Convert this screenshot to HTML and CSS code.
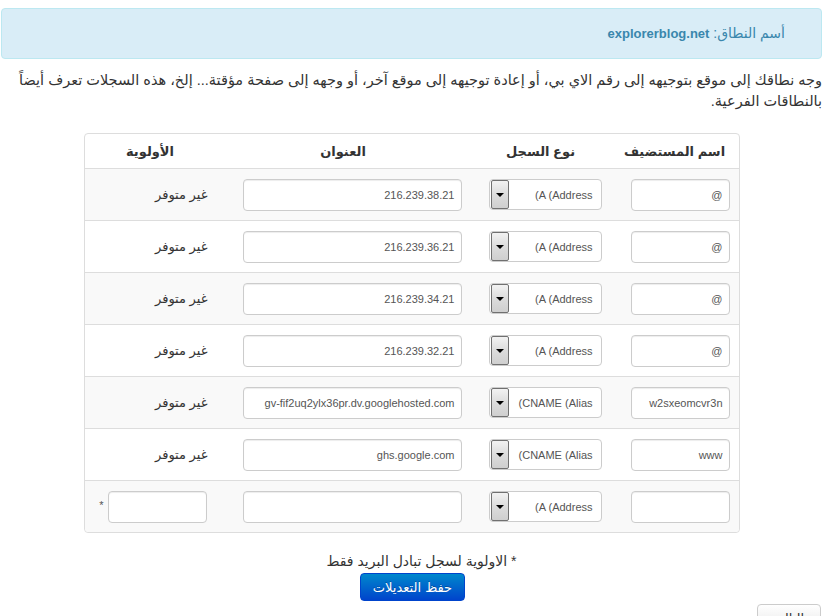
FILE: index.html
```html
<!DOCTYPE html>
<html lang="ar" dir="rtl">
<head>
    <meta charset="UTF-8">
    <meta name="viewport" content="width=device-width, initial-scale=1.0">
    <title>إدارة سجلات النطاق</title>
    <link rel="stylesheet" href="styles.css">
</head>
<body>
    <div class="page">
        <div class="alert">أسم النطاق: <strong>explorerblog.net</strong></div>

        <p class="intro">وجه نطاقك إلى موقع بتوجيهه إلى رقم الاي بي، أو إعادة توجيهه إلى موقع آخر، أو وجهه إلى صفحة مؤقتة... إلخ، هذه السجلات تعرف أيضاً بالنطاقات الفرعية.</p>

        <form class="dns-form" onsubmit="return false;">
            <table class="records">
                <thead>
                    <tr>
                        <th class="col-host">اسم المستضيف</th>
                        <th class="col-type">نوع السجل</th>
                        <th class="col-address">العنوان</th>
                        <th class="col-priority">الأولوية</th>
                    </tr>
                </thead>
                <tbody>
                    <tr>
                        <td><input type="text" class="field host" value="@"></td>
                        <td><div class="select"><span class="select-text">(A (Address</span><span class="select-arrow"></span></div></td>
                        <td><input type="text" class="field address" value="216.239.38.21"></td>
                        <td class="na">غير متوفر</td>
                    </tr>
                    <tr>
                        <td><input type="text" class="field host" value="@"></td>
                        <td><div class="select"><span class="select-text">(A (Address</span><span class="select-arrow"></span></div></td>
                        <td><input type="text" class="field address" value="216.239.36.21"></td>
                        <td class="na">غير متوفر</td>
                    </tr>
                    <tr>
                        <td><input type="text" class="field host" value="@"></td>
                        <td><div class="select"><span class="select-text">(A (Address</span><span class="select-arrow"></span></div></td>
                        <td><input type="text" class="field address" value="216.239.34.21"></td>
                        <td class="na">غير متوفر</td>
                    </tr>
                    <tr>
                        <td><input type="text" class="field host" value="@"></td>
                        <td><div class="select"><span class="select-text">(A (Address</span><span class="select-arrow"></span></div></td>
                        <td><input type="text" class="field address" value="216.239.32.21"></td>
                        <td class="na">غير متوفر</td>
                    </tr>
                    <tr>
                        <td><input type="text" class="field host" value="w2sxeomcvr3n"></td>
                        <td><div class="select"><span class="select-text">(CNAME (Alias</span><span class="select-arrow"></span></div></td>
                        <td><input type="text" class="field address" value="gv-fif2uq2ylx36pr.dv.googlehosted.com"></td>
                        <td class="na">غير متوفر</td>
                    </tr>
                    <tr>
                        <td><input type="text" class="field host" value="www"></td>
                        <td><div class="select"><span class="select-text">(CNAME (Alias</span><span class="select-arrow"></span></div></td>
                        <td><input type="text" class="field address" value="ghs.google.com"></td>
                        <td class="na">غير متوفر</td>
                    </tr>
                    <tr>
                        <td><input type="text" class="field host" value=""></td>
                        <td><div class="select"><span class="select-text">(A (Address</span><span class="select-arrow"></span></div></td>
                        <td><input type="text" class="field address" value=""></td>
                        <td class="prio-cell"><input type="text" class="field priority" value=""><span class="star">*</span></td>
                    </tr>
                </tbody>
            </table>

            <p class="note">* الاولوية لسجل تبادل البريد فقط</p>
            <div class="actions">
                <button type="submit" class="btn btn-primary">حفظ التعديلات</button>
            </div>
        </form>

        <div class="pager">
            <button type="button" class="btn">التالي</button>
        </div>
    </div>
</body>
</html>
```

FILE: styles.css
```css
html, body {
    margin: 0;
    padding: 0;
    background: #fff;
    overflow: hidden;
}
body {
    font-family: "Liberation Sans", "DejaVu Sans", sans-serif;
    font-size: 14px;
    color: #333;
}
.page {
    width: 821px;
    margin: 0 18px 0 1px;
    padding-top: 8px;
}
.alert {
    background-color: #d9edf7;
    border: 1px solid #bce8f1;
    border-radius: 4px;
    color: #3a87ad;
    padding: 14px 36px 14px 14px;
    line-height: 20px;
    font-size: 14px;
}
.alert strong {
    font-size: 13px;
}
.intro {
    margin: 11px 0 21px 0;
    line-height: 21px;
    font-size: 14.5px;
}
.records {
    width: 656px;
    margin: 0 auto;
    table-layout: fixed;
    border-collapse: separate;
    border-spacing: 0;
    border: 1px solid #ddd;
    border-radius: 4px;
}
.records th {
    height: 34px;
    font-size: 13px;
    font-weight: bold;
    text-align: center;
    vertical-align: middle;
    padding: 0 8px;
}
.records th.col-host { width: 112px; }
.records th.col-type { width: 124px; }
.records th.col-address { width: 239px; }
.records td {
    height: 51px;
    border-top: 1px solid #ddd;
    padding: 0 8px;
    vertical-align: middle;
    font-size: 13px;
}
.records tbody tr:nth-child(odd) td {
    background-color: #f9f9f9;
}
.records tbody tr:last-child td:first-child {
    border-bottom-right-radius: 4px;
}
.records tbody tr:last-child td:last-child {
    border-bottom-left-radius: 4px;
}
.field {
    display: block;
    box-sizing: border-box;
    height: 32px;
    padding: 4px 6px;
    border: 1px solid #ccc;
    border-radius: 4px;
    background: #fff;
    font-family: "Liberation Sans", sans-serif;
    font-size: 11px;
    color: #555;
    text-align: right;
    direction: ltr;
    box-shadow: inset 0 1px 1px rgba(0, 0, 0, 0.075);
}
.field.host {
    width: 99px;
    margin-right: 1px;
}
.field.address {
    width: 219px;
    margin-right: 1px;
}
.records td.na {
    padding-right: 8px;
}
.prio-cell {
    white-space: nowrap;
}
.field.priority {
    display: inline-block;
    vertical-align: middle;
    width: 99px;
    margin-right: 1px;
}
.star {
    display: inline-block;
    vertical-align: middle;
    margin-right: 4px;
    font-size: 11px;
    color: #555;
    position: relative;
    top: -2px;
}
.select {
    display: flex;
    align-items: center;
    box-sizing: border-box;
    width: 113px;
    height: 31px;
    margin-right: 1px;
    border: 1px solid #ccc;
    border-radius: 4px;
    background: #fff;
}
.select-text {
    flex: 1;
    padding-right: 8px;
    direction: ltr;
    text-align: right;
    font-family: "Liberation Sans", sans-serif;
    font-size: 11px;
    color: #555;
}
.select-arrow {
    position: relative;
    width: 16px;
    height: 27px;
    margin-left: 1px;
    border: 1px solid #707070;
    border-radius: 2px;
    background: linear-gradient(to bottom, #f2f2f2, #dcdcdc 50%, #cfcfcf);
}
.select-arrow::after {
    content: "";
    position: absolute;
    left: 4px;
    top: 12px;
    border-left: 4px solid transparent;
    border-right: 4px solid transparent;
    border-top: 4px solid #000;
}
.note {
    margin: 18px 0 2px 0;
    padding-left: 20px;
    text-align: center;
    line-height: 20px;
    font-size: 14px;
}
.actions {
    text-align: center;
    padding-left: 2px;
}
.btn {
    display: inline-block;
    box-sizing: border-box;
    height: 28px;
    padding: 4px 6px;
    border: 1px solid #ccc;
    border-radius: 4px;
    background: linear-gradient(to bottom, #fff, #e6e6e6);
    font-family: "DejaVu Sans", sans-serif;
    font-size: 13px;
    color: #333;
    white-space: nowrap;
    cursor: pointer;
}
.btn-primary {
    width: 105px;
    color: #fff;
    border-color: #0044cc;
    background: linear-gradient(to bottom, #0088cc, #0044cc);
    text-shadow: 0 -1px 0 rgba(0, 0, 0, 0.25);
}
.pager {
    margin-top: 3px;
    padding-right: 1px;
}
.pager .btn {
    width: 64px;
}
```
